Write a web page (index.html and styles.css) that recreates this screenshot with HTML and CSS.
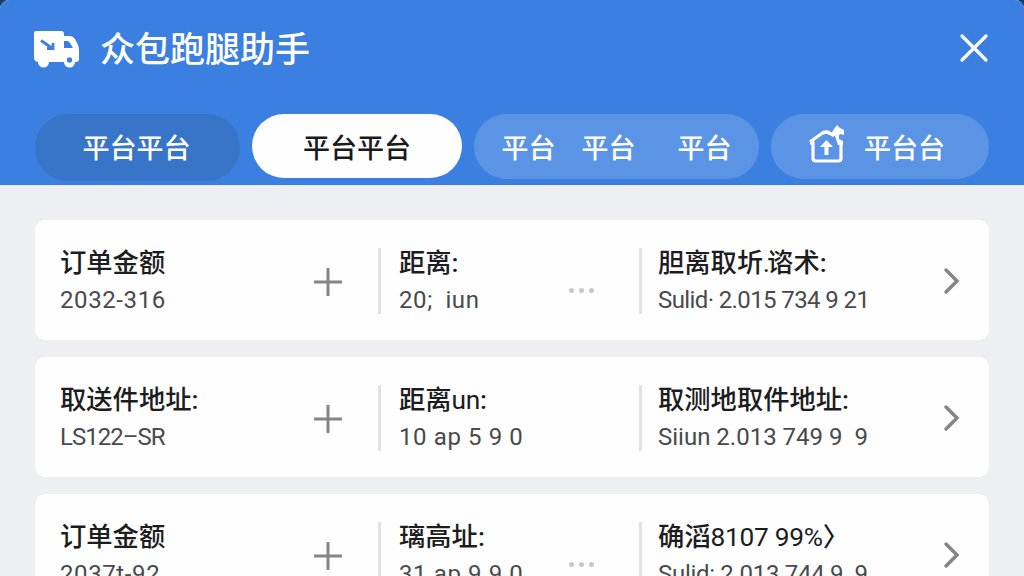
FILE: index.html
```
<!DOCTYPE html>
<html lang="zh-CN">

<head>
    <meta charset="utf-8">
    <meta name="viewport" content="width=device-width, initial-scale=1.0">
    <title>众包跑腿助手</title>
    <link rel="stylesheet" href="styles.css">
</head>

<body>
    <div class="app">
        <header>
            <div class="topbar">
                <svg class="logo" width="48" height="40" viewBox="0 0 48 40">
                    <path fill="#fff" d="M3 1H28Q31 1 31 4V6H37Q40 6 42 9L45 15Q46 17 46 20V29Q46 32 43 32H42A5.500 5.500 0 0 1 31 32H16A5.500 5.500 0 0 1 5 32Q1 31 1 28V3Q1 1 3 1Z" />
                    <path fill="#3b80e0" d="M31 11H34Q36 11 37 13L40 18H31Z" />
                    <circle cx="36.500" cy="30" r="2.700" fill="#3b80e0" />
                    <path d="M8 10.500L18 17.500M20 13V18.500H14" fill="none" stroke="#3b80e0" stroke-width="2.800" />
                </svg>
                <h1>众包跑腿助手</h1>
                <button class="close" aria-label="关闭">
                    <svg width="30" height="30" viewBox="0 0 30 30">
                        <path d="M3 3L27 27M27 3L3 27" fill="none" stroke="#fff" stroke-width="3.200" stroke-linecap="round" />
                    </svg>
                </button>
            </div>
            <nav>
                <button class="tab tab-dark">平台平台</button>
                <button class="tab tab-active">平台平台</button>
                <button class="tab tab-group"><span>平台</span><span>平台</span><span>平台</span></button>
                <button class="tab tab-icon">
                    <svg width="40" height="40" viewBox="0 0 40 40">
                        <path d="M3 18H6V33Q6 36 9 36H31Q34 36 34 33V17M3 17L14 9Q19 5 24 9L27 11" fill="none" stroke="#fff" stroke-width="3.200" />
                        <path fill="#fff" d="M19.500 15L26 22H21.500V30H17.500V22H13Z" />
                        <path fill="#fff" d="M30 0L33 3L37 5V10L34 9L32 10V14L36 16V20H31L28 11L24 9L27 4Z" />
                    </svg>
                    <span>平台台</span>
                </button>
            </nav>
        </header>

        <main>
            <article class="card">
                <section class="cell first">
                    <div>
                        <h2>订单金额</h2>
                        <p class="wide">2032-316</p>
                    </div>
                    <svg class="plus" width="30" height="30" viewBox="0 0 30 30"><path d="M1 15H29M15 1V29" /></svg>
                </section>
                <section class="cell second">
                    <div>
                        <h2>距离:</h2>
                        <p class="loose">20; iun</p>
                    </div>
                    <span class="dots"><i></i><i></i><i></i></span>
                </section>
                <section class="cell third">
                    <div>
                        <h2>胆离取圻<small>.</small>谘术:</h2>
                        <p class="tight">Sulid· 2.015 734 9 21</p>
                    </div>
                    <svg class="arrow" width="18" height="28" viewBox="0 0 18 28"><path d="M3 3L14 14L3 25" /></svg>
                </section>
            </article>

            <article class="card">
                <section class="cell first">
                    <div>
                        <h2>取送件地址:</h2>
                        <p class="tighter">LS122–SR</p>
                    </div>
                    <svg class="plus" width="30" height="30" viewBox="0 0 30 30"><path d="M1 15H29M15 1V29" /></svg>
                </section>
                <section class="cell second">
                    <div>
                        <h2>距离<span class="latin">un</span>:</h2>
                        <p class="wide">10 ap 5 9 0</p>
                    </div>
                </section>
                <section class="cell third">
                    <div>
                        <h2>取测地取件地址:</h2>
                        <p>Siiun 2.013 749 9 &nbsp;9</p>
                    </div>
                    <svg class="arrow" width="18" height="28" viewBox="0 0 18 28"><path d="M3 3L14 14L3 25" /></svg>
                </section>
            </article>

            <article class="card">
                <section class="cell first">
                    <div>
                        <h2>订单金额</h2>
                        <p class="wide">2037t-92</p>
                    </div>
                    <svg class="plus" width="30" height="30" viewBox="0 0 30 30"><path d="M1 15H29M15 1V29" /></svg>
                </section>
                <section class="cell second">
                    <div>
                        <h2>璃高址:</h2>
                        <p class="wide">31 ap 9 9 0</p>
                    </div>
                    <span class="dots"><i></i><i></i><i></i></span>
                </section>
                <section class="cell third">
                    <div>
                        <h2>确滔<span class="latin">8107 99%</span>〉</h2>
                        <p class="snug">Sulid: 2.013 744 9 &nbsp;9</p>
                    </div>
                    <svg class="arrow" width="18" height="28" viewBox="0 0 18 28"><path d="M3 3L14 14L3 25" /></svg>
                </section>
            </article>
        </main>
    </div>
</body>

</html>
```
FILE: styles.css
```
* {
    box-sizing: border-box;
}

body {
    margin: 0;
    height: 576px;
    overflow: hidden;
    background-color: #1c3b66;
    font-family: Roboto, "Noto Sans CJK SC", sans-serif;
}

.app {
    height: 576px;
    overflow: hidden;
    border-radius: 9px 9px 0 0;
    background-color: #eeeff2;
}

header {
    height: 185px;
    padding: 20px 35px 0 33px;
    background-color: #3b80e0;
}

.topbar {
    display: flex;
    align-items: center;
    height: 56px;
}

.logo {
    margin-top: 3px;
}

h1 {
    margin: -3px 0 0 19px;
    font-family: "Noto Sans CJK SC", sans-serif;
    font-size: 35px;
    font-weight: 500;
    line-height: 56px;
    color: white;
}

button {
    border: none;
    padding: 0;
    background: none;
    color: white;
    font-family: "Noto Sans CJK SC", sans-serif;
    cursor: pointer;
}

.close {
    display: flex;
    margin-left: auto;
}

nav {
    display: flex;
    gap: 12px;
    margin: 38px 0 0 2px;
}

.tab {
    display: flex;
    align-items: center;
    justify-content: center;
    height: 65px;
    border-radius: 33px;
    background-color: #5b94e4;
    font-size: 27px;
    font-weight: 500;
    line-height: 40px;
}

.tab-dark {
    width: 205px;
    height: 67px;
    padding: 0 2px 2px 0;
    background-color: #3874c8;
}

.tab-active {
    width: 210px;
    height: 64px;
    padding-top: 1px;
    background-color: #fefefe;
    color: #1a1a1c;
}

.tab-group {
    width: 285px;
}

.tab-group span:nth-child(2) {
    margin: 0 42px 0 26px;
}

.tab-icon {
    width: 218px;
    gap: 17px;
    padding-right: 8px;
}

.tab-icon svg {
    margin-bottom: 4px;
}

main {
    display: flex;
    flex-direction: column;
    gap: 17px;
    padding: 35px 35px 0;
}

.card {
    display: flex;
    flex-shrink: 0;
    height: 120px;
    padding: 28px 28px 0 25px;
    border-radius: 10px;
    background-color: #fefefe;
}

.cell {
    display: flex;
    justify-content: space-between;
    height: 66px;
}

.first {
    width: 318px;
    padding-right: 35px;
}

.second {
    width: 261px;
    padding: 0 45px 0 18px;
    border-left: 3px solid #e2e2e4;
}

.third {
    flex: 1;
    padding-left: 16px;
    border-left: 3px solid #e2e2e4;
}

h2 {
    margin: 0;
    height: 32px;
    font-size: 26.3px;
    font-weight: 500;
    line-height: 30px;
    color: #1d1d1f;
    white-space: nowrap;
}

h2 small {
    display: inline-block;
    width: 4px;
    line-height: 20px;
}

.latin {
    font-weight: 400;
    letter-spacing: -.3px;
}

p {
    margin: 4px 0 0;
    height: 32px;
    font-size: 24px;
    line-height: 33px;
    color: #4a4a4c;
    white-space: pre;
}

.tight {
    letter-spacing: -.6px;
}

.tighter {
    letter-spacing: -1px;
}

.snug {
    letter-spacing: -.3px;
}

.wide {
    letter-spacing: .6px;
}

.loose {
    letter-spacing: .6px;
    word-spacing: 6px;
}

.plus {
    margin-top: 19px;
    fill: none;
    stroke: #858587;
    stroke-width: 3;
}

.dots {
    display: flex;
    gap: 5px;
    margin-top: 40px;
}

.dots i {
    width: 5px;
    height: 5px;
    border-radius: 50%;
    background-color: #c8c8ca;
}

.arrow {
    margin-top: 19px;
    fill: none;
    stroke: #858587;
    stroke-width: 3.5;
    stroke-linecap: round;
}
```
